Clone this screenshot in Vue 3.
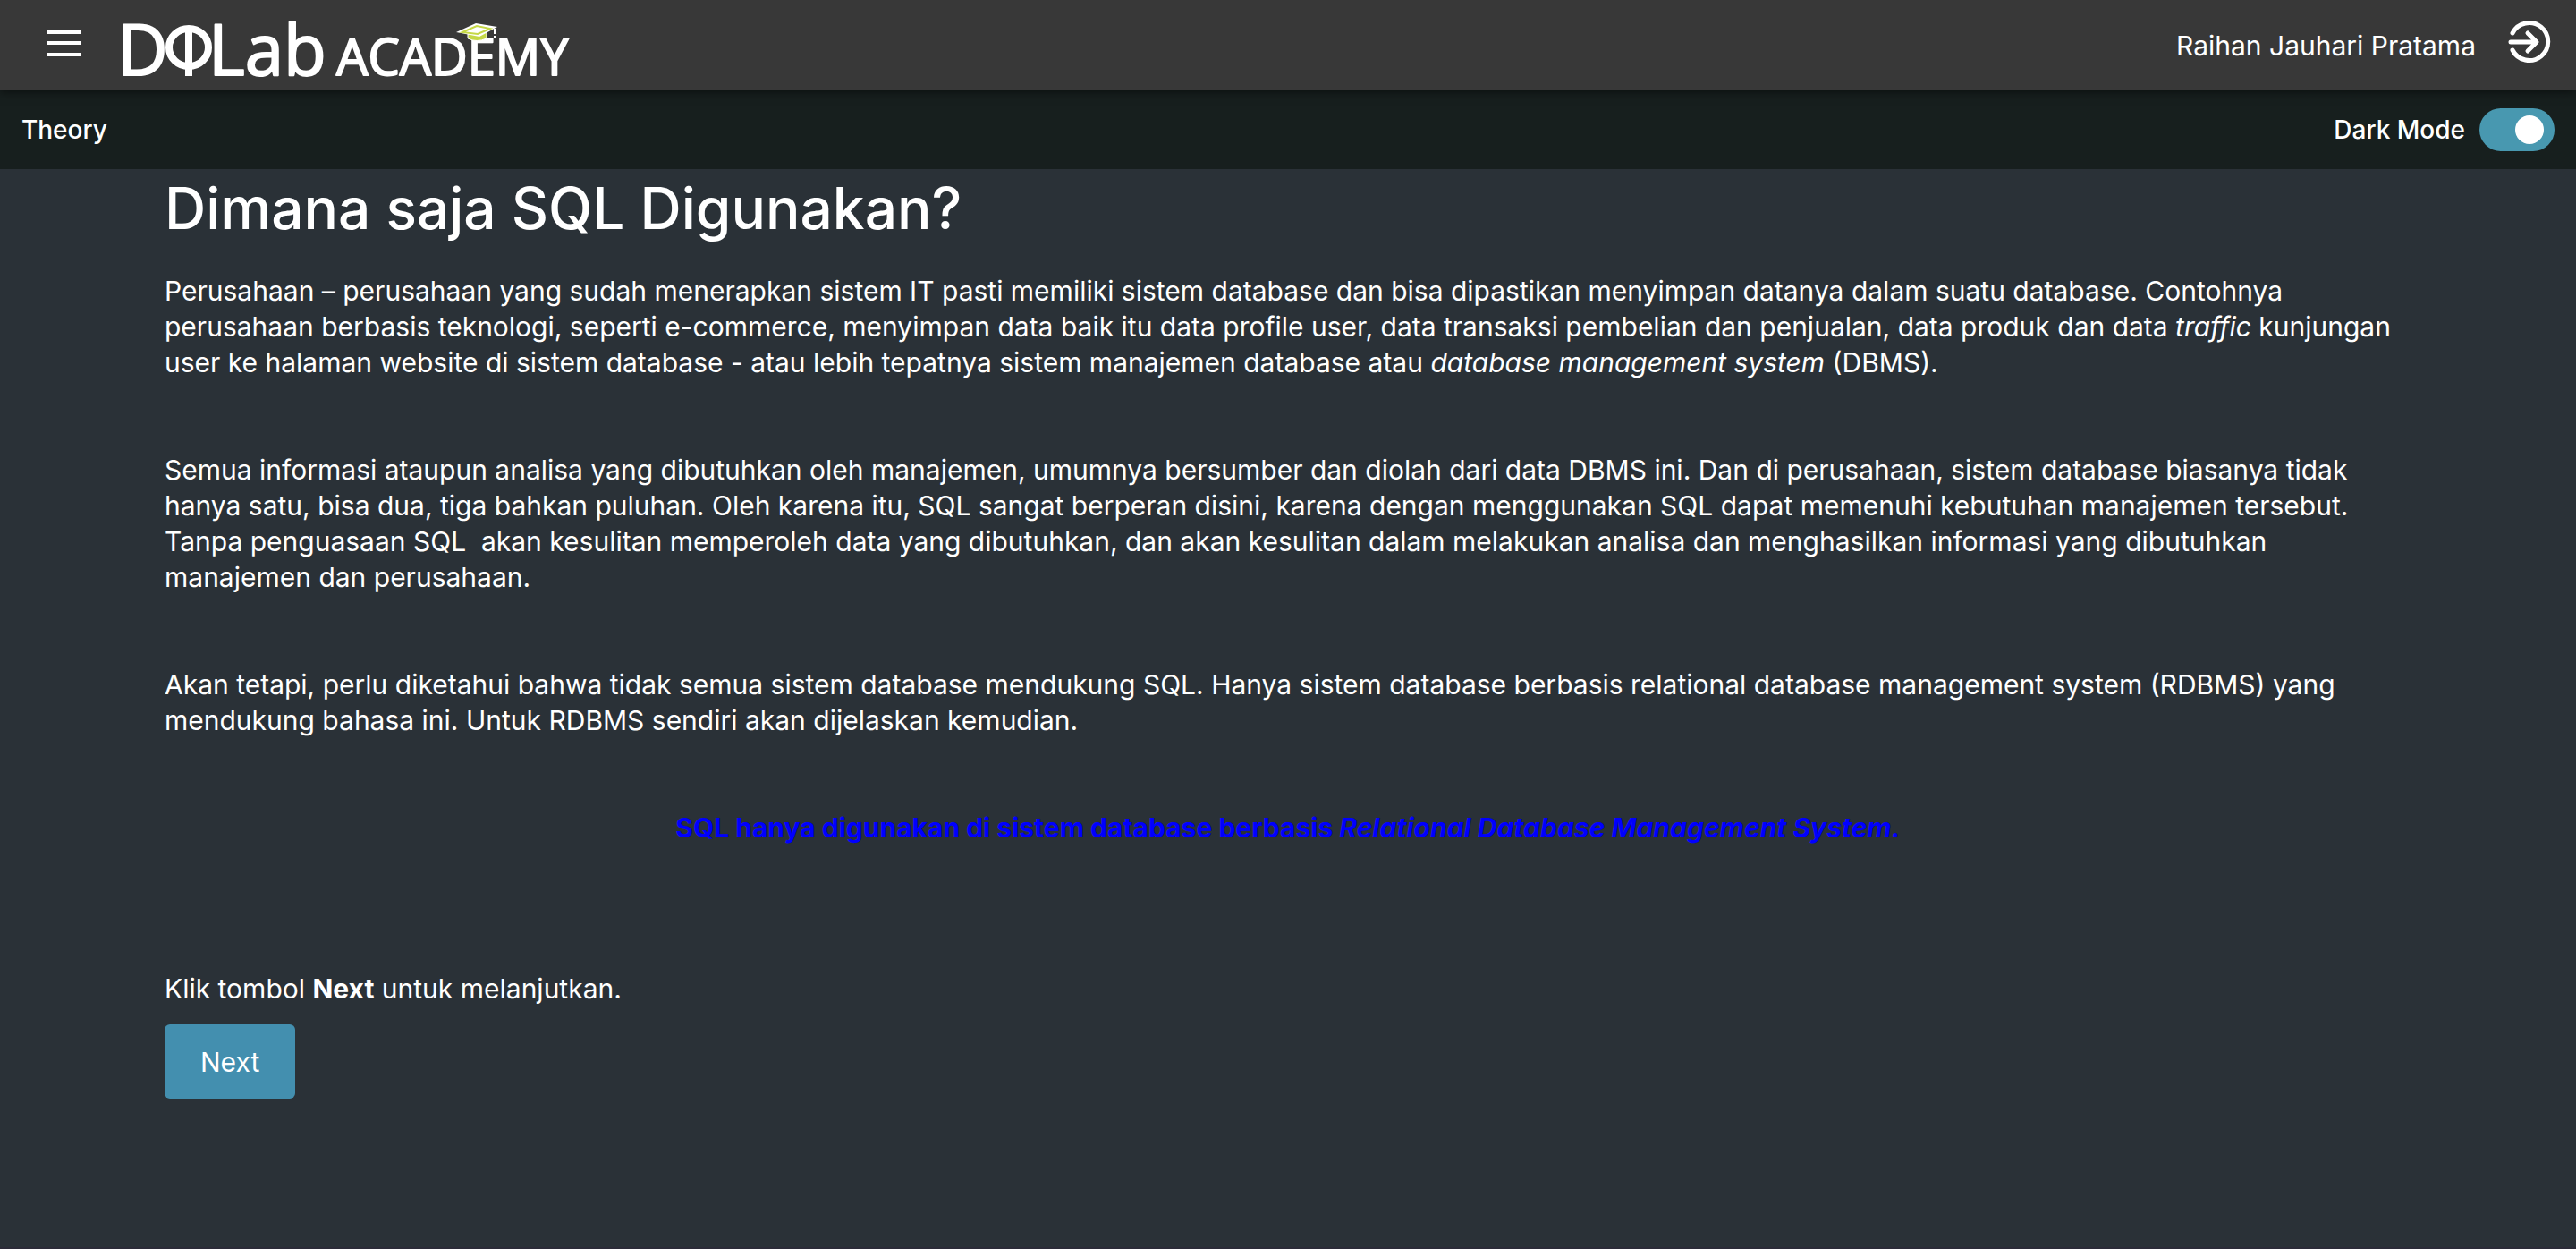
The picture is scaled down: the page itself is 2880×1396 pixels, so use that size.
<script setup>
import { ref } from 'vue'

const darkMode = ref(true)
</script>

<template>
  <div class="page" :class="{ light: !darkMode }">
    <header class="topbar">
      <button class="icon-button menu" type="button" aria-label="Menu">
        <svg width="38" height="30" viewBox="0 0 38 30" fill="#fff" aria-hidden="true">
          <path d="M0 0h38v4H0zM0 12h38v4H0zM0 25h38v4H0z" />
        </svg>
      </button>
      <a class="brand" href="#" aria-label="DQLab Academy">
        <svg width="540" height="101" viewBox="130 0 540 101" aria-hidden="true">
          <g class="brand-text">
            <text class="big" x="131" y="84">D</text>
            <text class="big" x="233" y="84">Lab</text>
            <text class="small" x="376" y="84">ACADEMY</text>
          </g>
          <ellipse cx="211" cy="53" rx="22" ry="21" fill="none" stroke="#fff" stroke-width="8" />
          <path d="M207 30h8v55h-8z" fill="#fff" />
          <path d="M523 38v5q10 5 21 0v-7z" fill="#c5d846" stroke="#fff" stroke-width="1" />
          <path d="M510 36l22-10 24 4-20 11z" fill="#fff" />
          <path d="M517 36l16-7 15 3-14 6z" fill="#fff" stroke="#c5d846" stroke-width="2" />
          <path d="M553 32v10" stroke="#fff" stroke-width="2" stroke-dasharray="6 2" />
        </svg>
      </a>
      <span class="user">Raihan Jauhari Pratama</span>
      <button class="icon-button" type="button" aria-label="Logout">
        <svg width="48" height="48" viewBox="0 0 48 48" fill="none" stroke="#fff" stroke-width="5" stroke-linecap="round" stroke-linejoin="round" aria-hidden="true">
          <path d="M5 14a21 21 0 1 1 0 19" />
          <path d="M3 24h28M22 14l10 10-10 10" />
        </svg>
      </button>
    </header>

    <div class="subbar">
      <span>Theory</span>
      <label class="mode">
        Dark Mode
        <input v-model="darkMode" type="checkbox" role="switch" />
      </label>
    </div>

    <main class="content">
      <h1>Dimana saja SQL Digunakan?</h1>
      <p>
        Perusahaan – perusahaan yang sudah menerapkan sistem IT pasti memiliki sistem database dan bisa dipastikan menyimpan datanya dalam suatu database. Contohnya
        perusahaan berbasis teknologi, seperti e-commerce, menyimpan data baik itu data profile user, data transaksi pembelian dan penjualan, data produk dan data <em>traffic</em> kunjungan
        user ke halaman website di sistem database - atau lebih tepatnya sistem manajemen database atau <em>database management system</em> (DBMS).
      </p>
      <p>
        Semua informasi ataupun analisa yang dibutuhkan oleh manajemen, umumnya bersumber dan diolah dari data DBMS ini. Dan di perusahaan, sistem database biasanya tidak
        hanya satu, bisa dua, tiga bahkan puluhan. Oleh karena itu, SQL sangat berperan disini, karena dengan menggunakan SQL dapat memenuhi kebutuhan manajemen tersebut.
        Tanpa penguasaan SQL&nbsp; akan kesulitan memperoleh data yang dibutuhkan, dan akan kesulitan dalam melakukan analisa dan menghasilkan informasi yang dibutuhkan
        manajemen dan perusahaan.
      </p>
      <p>
        Akan tetapi, perlu diketahui bahwa tidak semua sistem database mendukung SQL. Hanya sistem database berbasis relational database management system (RDBMS) yang
        mendukung bahasa ini. Untuk RDBMS sendiri akan dijelaskan kemudian.
      </p>
      <p class="note">
        SQL hanya digunakan di sistem database berbasis <em>Relational Database Management System.</em>
      </p>
      <p class="hint">Klik tombol <strong>Next</strong> untuk melanjutkan.</p>
      <button class="next" type="button">Next</button>
    </main>
  </div>
</template>

<style>
body {
  margin: 0;
  background: #2a3137;
}
</style>

<style scoped>
.page {
  box-sizing: border-box;
  min-height: 100vh;
  background: #2a3137;
  border-bottom: 2px solid #2b2b38;
  color: #fff;
  font-family: Inter, "Noto Sans", sans-serif;
  font-size: 30px;
  line-height: 40px;
}

.topbar {
  position: relative;
  box-sizing: border-box;
  display: flex;
  align-items: center;
  height: 101px;
  padding: 0 28px 0 52px;
  background: #383838;
  box-shadow: 0 2px 10px rgba(0, 0, 0, 0.5);
}

.icon-button {
  display: flex;
  padding: 0;
  border: 0;
  background: none;
  cursor: pointer;
}

.icon-button svg {
  margin-bottom: 8px;
}

.menu svg {
  margin-bottom: 4px;
}

.brand {
  display: flex;
  margin-left: 40px;
}

.brand svg {
  overflow: visible;
}

.brand-text {
  fill: #fff;
  stroke: #fff;
  stroke-width: 2px;
  stroke-linejoin: round;
  font-family: "Open Sans", sans-serif;
  font-weight: 500;
}

.big {
  font-size: 78px;
}

.small {
  font-size: 56px;
}

.user {
  margin: 0 36px 0 auto;
}

.subbar {
  box-sizing: border-box;
  display: flex;
  align-items: center;
  justify-content: space-between;
  height: 88px;
  padding: 0 24px;
  background: #171f1e;
  font-size: 28px;
  font-weight: 500;
}

.mode {
  display: flex;
  align-items: center;
  gap: 16px;
}

.mode input {
  appearance: none;
  display: flex;
  align-items: center;
  box-sizing: border-box;
  width: 84px;
  height: 48px;
  margin: 0;
  padding: 0 8px;
  border-radius: 24px;
  background: #8a8f94;
  cursor: pointer;
}

.mode input::before {
  content: "";
  width: 32px;
  height: 32px;
  border-radius: 50%;
  background: #fff;
}

.mode input:checked {
  justify-content: flex-end;
  padding-right: 12px;
  background: #4898b0;
}

.content {
  padding: 8px 184px 0;
}

h1 {
  margin: 0 0 36px;
  font-size: 64px;
  font-weight: 500;
  line-height: 72px;
}

p {
  margin: 0 0 80px;
}

.note {
  margin-bottom: 140px;
  color: #0000ff;
  font-weight: 700;
  text-align: center;
}

.hint {
  margin-bottom: 20px;
}

.next {
  height: 83px;
  padding: 0 40px;
  border: 0;
  border-radius: 6px;
  background: #438faf;
  color: #fff;
  font: inherit;
  cursor: pointer;
}

.light {
  background: #fff;
  color: #222;
}

.light .subbar {
  background: #eef1f2;
}

.light .topbar {
  color: #fff;
}
</style>
